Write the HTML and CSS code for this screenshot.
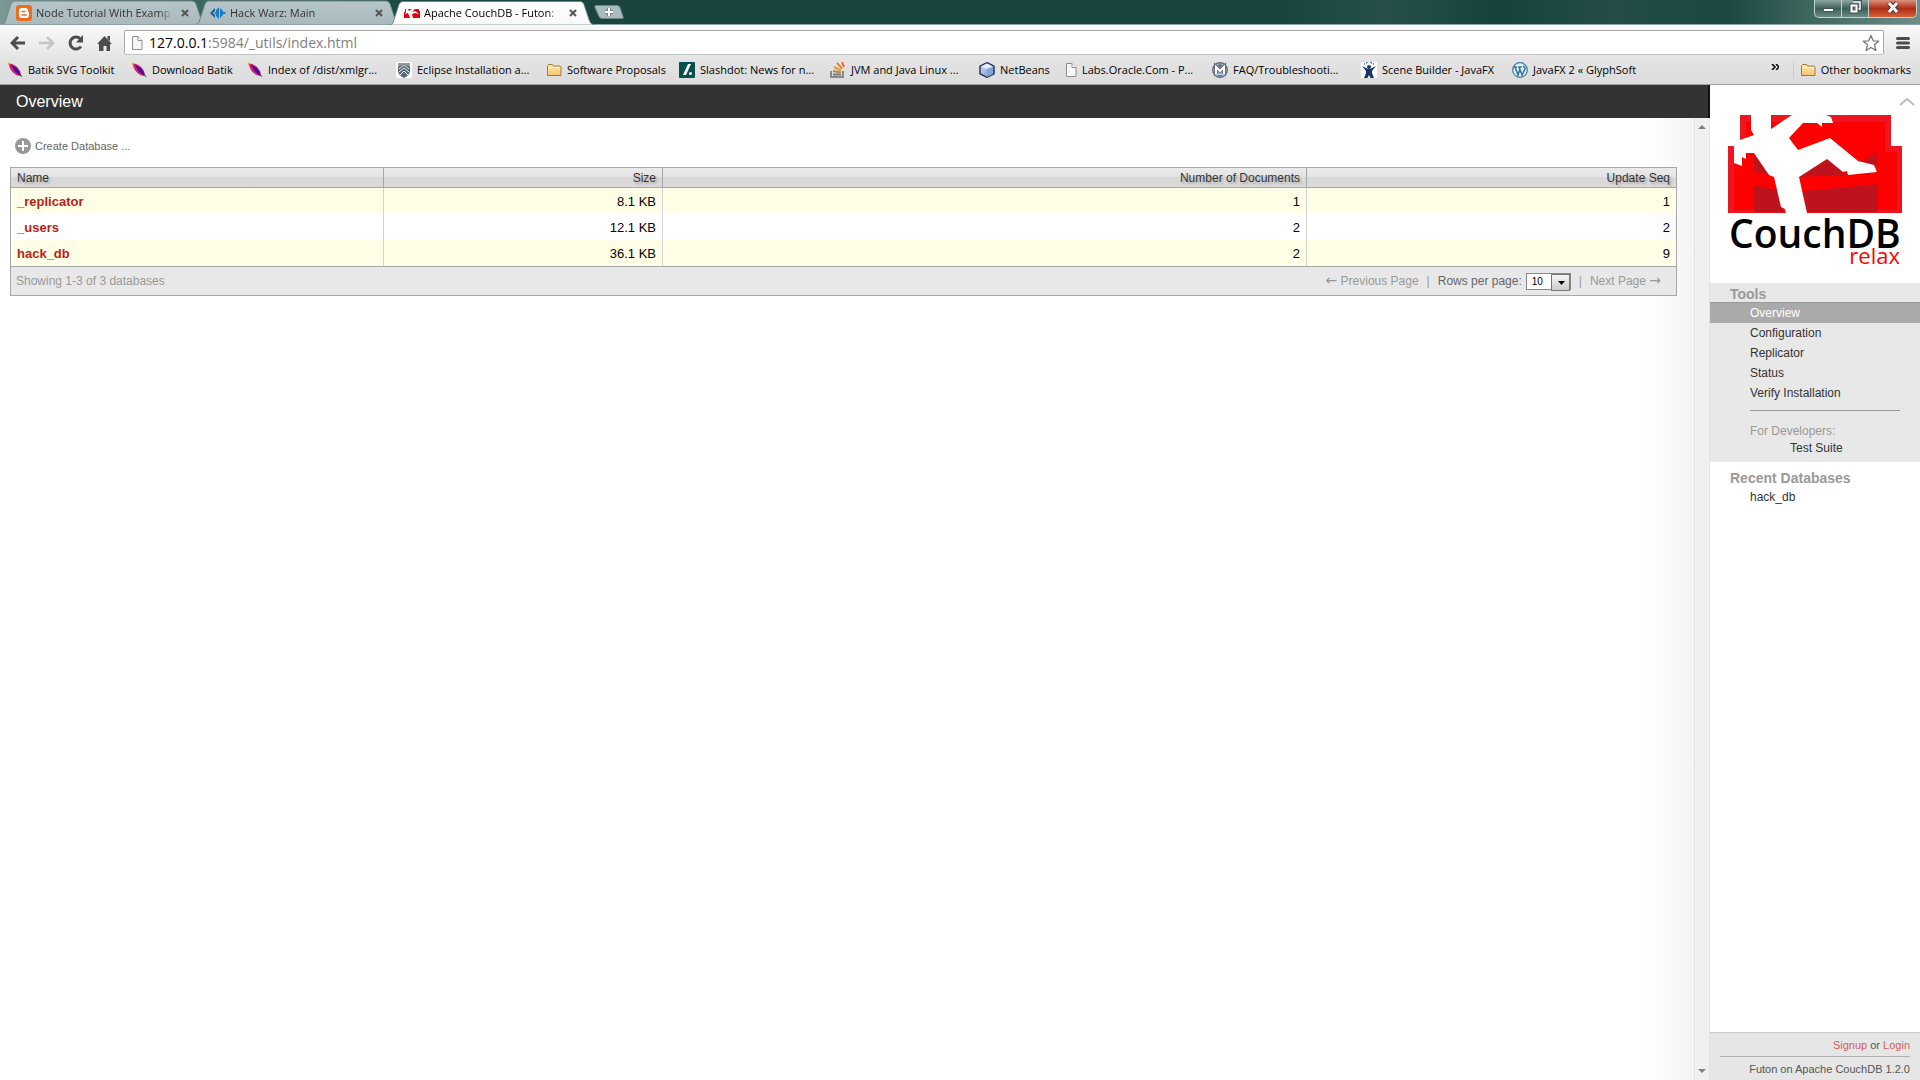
FILE: index.html
```html
<!DOCTYPE html>
<html lang="en">
<head>
<meta charset="utf-8">
<title>Apache CouchDB - Futon: Overview</title>
<link rel="stylesheet" href="styles.css">
</head>
<body>
<svg class="defs" aria-hidden="true">
  <defs>
    <linearGradient id="folderFill" x2="0" y2="1"><stop stop-color="#fdeab2"/><stop offset="1" stop-color="#f6c570"/></linearGradient>
    <linearGradient id="tabFill" x2="0" y2="1"><stop stop-color="#b7c5c9"/><stop offset="1" stop-color="#a9b9be"/></linearGradient>
    <linearGradient id="activeFill" x2="0" y2="1"><stop stop-color="#fff"/><stop offset="1" stop-color="#f9f9f9"/></linearGradient>
    <linearGradient id="cubeFill" x2="1" y2="1"><stop stop-color="#cfe0f7"/><stop offset="1" stop-color="#6d93c9"/></linearGradient>
  </defs>
  <symbol id="feather" viewBox="0 0 16 16">
    <path d="M1 1l3 3" stroke="#d8b040" stroke-width="2"/>
    <path d="M2 3c1-2 3-1 5 0 4 2 7 6 7 11-6 0-11-5-12-11z" fill="#e0206c"/>
    <path d="M4 3c5 1 9 6 10 11-4-2-8-6-10-11z" fill="#4a0a9c"/>
    <path d="M3 5c2 4 5 7 9 8-4-1-7-4-9-8z" fill="#b3127c"/>
    <path d="M13 12l2 3" stroke="#555"/>
  </symbol>
  <symbol id="folder" viewBox="0 0 16 16">
    <path d="M1.500 13.500v-10l1-1h4l1 1.500h6.500l1 1v8.500z" fill="url(#folderFill)" stroke="#a3763c"/>
    <path d="M2.500 5.500h12" stroke="#fff5d2"/>
  </symbol>
  <symbol id="page" viewBox="0 0 12 16">
    <path d="M1.500 1.500h5.500l4 4v9h-9.500z" fill="#f6f6f6" stroke="#8e8e8e"/>
    <path d="M7 1.500v4h4" fill="#fff" stroke="#8e8e8e"/>
  </symbol>
  <symbol id="close" viewBox="0 0 8 8"><path d="M1 1l6 6M7 1l-6 6" stroke="#555" stroke-width="2"/></symbol>
  <symbol id="tab" viewBox="0 0 204 24">
    <path d="M0 24c3 0 3-2 4-5l5-15q1-3 4-3h177q3 0 4 3l5 15c1 3 2 5 5 5z"/>
    <path d="M0 24c3 0 3-2 4-5l5-15q1-3 4-3h177q3 0 4 3l5 15c1 3 2 5 5 5" fill="none" class="edge"/>
  </symbol>
</svg>

<header class="browser">
  <div class="titlebar">
    <nav class="tabs" aria-label="Tabs">
      <div class="tab">
        <svg class="shape"><use href="#tab"/></svg>
        <svg class="icon" viewBox="0 0 16 16"><rect width="16" height="16" rx="3" fill="#ec6f1c"/><path d="M6 3h3q3 0 3 3 0 1 1 1v3q0 3-3 3H6q-3 0-3-3V6q0-3 3-3z" fill="#fff"/><path d="M6 6.500h3M6 10h4" stroke="#ec6f1c" stroke-width="1.500" stroke-linecap="round"/></svg>
        <a class="label" href="#">Node Tutorial With Examp</a>
        <button class="close" aria-label="Close tab"><svg><use href="#close"/></svg></button>
      </div>
      <div class="tab">
        <svg class="shape"><use href="#tab"/></svg>
        <svg class="icon" viewBox="0 0 16 16"><path d="M5 3v3L3 8l2 2v3L0 8z" fill="#1d5f96"/><path d="M6 5l3-3v12l-3-3V9.500L4.500 8 6 6.500z" fill="#1a7cc6"/><path d="M10 3l3 3v1h2l1 1-1 1h-2v1l-3 3z" fill="#1a7cc6"/></svg>
        <a class="label" href="#">Hack Warz: Main</a>
        <button class="close" aria-label="Close tab"><svg><use href="#close"/></svg></button>
      </div>
      <div class="tab active">
        <svg class="shape"><use href="#tab"/></svg>
        <svg class="icon" viewBox="0 0 16 16"><path d="M1 4h14v2h1v7H0V7h1z" fill="#e9000f"/><path d="M2 4h2l1 2 3-2h3L8 7l3-1 4 3-4-1-3 1 1 4H6L4 8 1 9l1-2z" fill="#fff"/></svg>
        <a class="label" href="#">Apache CouchDB - Futon:</a>
        <button class="close" aria-label="Close tab"><svg><use href="#close"/></svg></button>
      </div>
      <button class="newtab" aria-label="New tab"><svg viewBox="0 0 32 16"><path d="M3 1.500h21q2 0 3 2l3 9q1 2-1 2H9q-2 0-3-2l-4-9q-1-2 1-2z" fill="#a9bbbd" stroke="#6d8886"/><path d="M16 4v8M12 8h8" stroke="#6f8487" stroke-width="4"/><path d="M16 4v8M12 8h8" stroke="#fff" stroke-width="2"/></svg></button>
    </nav>
    <div class="winbuttons">
      <button aria-label="Minimize"><svg viewBox="0 0 14 14"><path d="M2.500 8.500h10v3h-10z" fill="#fff" stroke="#455"/></svg></button>
      <button aria-label="Restore"><svg viewBox="0 0 14 14"><path d="M5 1.500h7.500v8H10" fill="none" stroke="#455" stroke-width="3"/><path d="M5 2h7v7h-2" fill="none" stroke="#fff" stroke-width="1.500"/><path d="M3.500 5.500h5v6h-5z" fill="none" stroke="#455" stroke-width="4"/><path d="M3.500 5.500h5v6h-5z" fill="#566" stroke="#fff" stroke-width="2"/></svg></button>
      <button class="quit" aria-label="Close"><svg viewBox="0 0 14 14"><path d="M3 3l8 9M11 3l-8 9" stroke="#533" stroke-width="5"/><path d="M3 3l8 9M11 3l-8 9" stroke="#fff" stroke-width="3"/></svg></button>
    </div>
  </div>

  <div class="toolbar">
    <button aria-label="Back"><svg viewBox="0 0 16 16"><path d="M8 2L2 8l6 6M2 8h13" fill="none" stroke="#4d4d4d" stroke-width="3"/></svg></button>
    <button aria-label="Forward"><svg viewBox="0 0 16 16"><path d="M8 2l6 6-6 6M14 8H0" fill="none" stroke="#c4c4c4" stroke-width="2.500"/></svg></button>
    <button aria-label="Reload"><svg viewBox="0 0 16 16"><path d="M13 11.500A6 6 0 1 1 12 3.500" fill="none" stroke="#4d4d4d" stroke-width="3"/><path d="M15 0v7.500H8z" fill="#4d4d4d"/></svg></button>
    <button aria-label="Home"><svg viewBox="0 0 16 16"><path d="M7.500 1l7 7.500-1.500 1V16H9.500v-5h-3v5H2V9.500L.5 8.500z" fill="#4d4d4d"/><path d="M10.500 1H13v5l-2.500-2z" fill="#4d4d4d"/></svg></button>
    <div class="omnibox">
      <svg class="pageicon"><use href="#page"/></svg>
      <span class="url"><b>127.0.0.1</b>:5984/_utils/index.html</span>
      <button aria-label="Bookmark this page"><svg viewBox="0 0 18 18"><path d="M9 1.500l2.200 5.300 5.500.4-4.200 3.600 1.500 5.700L9 13.500l-5 3 1.500-5.700L1.300 7.200l5.500-.4z" fill="#fff" stroke="#777" stroke-width="1.300" stroke-linejoin="round"/></svg></button>
    </div>
    <button class="menu" aria-label="Menu"><svg viewBox="0 0 14 14"><path d="M1.500 2.500h11M1.500 7h11M1.500 11.500h11" stroke="#4d4d4d" stroke-width="3" stroke-linecap="round"/></svg></button>
  </div>

  <nav class="bookmarks" aria-label="Bookmarks">
    <div class="marks">
      <a href="#"><svg><use href="#feather"/></svg>Batik SVG Toolkit</a>
      <a href="#"><svg><use href="#feather"/></svg>Download Batik</a>
      <a href="#"><svg><use href="#feather"/></svg>Index of /dist/xmlgr...</a>
      <a href="#"><svg viewBox="0 0 16 16"><path fill="#fff" d="M0 0h16v16H0z"/><path d="M2 1h12v8q0 4-6 7-6-3-6-7z" fill="#536b78"/><path d="M2 1h12v4L8 2 2 5z" fill="#999"/><path d="M3 7l5-4 5 4M3 10l5-4 5 4M4 13l4-4 4 4" fill="none" stroke="#e8eef0"/></svg>Eclipse Installation a...</a>
      <a href="#"><svg><use href="#folder"/></svg>Software Proposals</a>
      <a href="#"><svg viewBox="0 0 16 16"><rect width="16" height="16" rx="1" fill="#07514d"/><path d="M9 2h3L7 13H4z" fill="#fff"/><circle cx="11.500" cy="11.500" r="1.500" fill="#fff"/></svg>Slashdot: News for n...</a>
      <a href="#"><svg viewBox="0 0 16 16"><path d="M1 9v6h12V9" fill="none" stroke="#888" stroke-width="2"/><path d="M3 12.500h8" stroke="#777" stroke-width="2"/><path d="M3 9l8 1.500" stroke="#a98b58" stroke-width="2"/><path d="M4 5l7 3.500" stroke="#e49b2f" stroke-width="2"/><path d="M7 1l5 5.500" stroke="#f07f24" stroke-width="2"/><path d="M12 0l2 5" stroke="#f4603a" stroke-width="2"/></svg>JVM and Java Linux ...</a>
      <a href="#"><svg viewBox="0 0 16 16"><path d="M8 .7l7 3.500v7.600l-7 3.500-7-3.500V4.200z" fill="url(#cubeFill)" stroke="#1e2c55" stroke-width="1.400"/><path d="M2 4.500L8 7l6-2.500L8 1.500z" fill="#e4effc"/><path d="M8 7v8l6-3V4.700z" fill="#83a5d6"/></svg>NetBeans</a>
      <a class="plain" href="#"><svg><use href="#page"/></svg>Labs.Oracle.Com - P...</a>
      <a href="#"><svg viewBox="0 0 16 16"><circle cx="8" cy="8" r="7.300" fill="#a9cdea" stroke="#66727c" stroke-width="1.400"/><path d="M8 1l3 3-3 2-3-2zM8 15l3-2H5z" fill="#777"/><path d="M4 12V5l4 4 4-4v7" fill="none" stroke="#667" stroke-width="4"/><path d="M4 12V5l4 4 4-4v7" fill="none" stroke="#fff" stroke-width="2"/></svg>FAQ/Troubleshooti...</a>
      <a href="#"><svg viewBox="0 0 16 16"><path fill="#fff" d="M0 0h16v16H0z"/><path d="M1 4l6 3h2l6-3-4 5v2l2 5H9.500L8 13l-1.500 3H3l2-5V9z" fill="#12386b"/><circle cx="8" cy="5" r="2" fill="#12386b"/><path d="M3 2h1M5 .7h1.500M9.500.7H11M12 2h1" stroke="#2d70ac" stroke-width="1.400"/></svg>Scene Builder - JavaFX</a>
      <a href="#"><svg viewBox="0 0 16 16"><circle cx="8" cy="8" r="7.300" fill="#eaf3f8" stroke="#33799f" stroke-width="1.200"/><path d="M2 5h3M6 5h4M3 5l3 8 2-6M7 5l3 8 3-6q0-2-2-3" fill="none" stroke="#33799f" stroke-width="1.600"/></svg>JavaFX 2 « GlyphSoft</a>
    </div>
    <button class="more" aria-label="More bookmarks"><svg viewBox="0 0 8 6"><path d="M1 0l3 3-3 3M5 0l3 3-3 3" fill="none" stroke="#000" stroke-width="1.500"/></svg></button>
    <a class="other" href="#"><svg><use href="#folder"/></svg>Other bookmarks</a>
  </nav>
</header>

<div class="futon">
  <main class="wrap">
    <h1>Overview</h1>
    <div class="scroller">
      <div class="content">
        <button class="create"><svg viewBox="0 0 16 16"><circle cx="8" cy="8" r="8" fill="#989898"/><path d="M8 3v10M3 8h10" stroke="#fff" stroke-width="2"/></svg>Create Database ...</button>
        <table class="listing">
          <colgroup><col class="c-name"><col class="c-size"><col class="c-count"><col class="c-seq"></colgroup>
          <thead>
            <tr><th>Name</th><th>Size</th><th>Number of Documents</th><th>Update Seq</th></tr>
          </thead>
          <tbody>
            <tr><th><a href="#">_replicator</a></th><td>8.1 KB</td><td>1</td><td>1</td></tr>
            <tr><th><a href="#">_users</a></th><td>12.1 KB</td><td>2</td><td>2</td></tr>
            <tr><th><a href="#">hack_db</a></th><td>36.1 KB</td><td>2</td><td>9</td></tr>
          </tbody>
        </table>
        <div class="tablefoot">
          <span>Showing 1-3 of 3 databases</span>
          <div class="paging">
            <span><span class="arrow">←</span> Previous Page</span><span class="bar">|</span>
            <label for="perpage">Rows per page:</label>
            <span class="pick">
              <select id="perpage"><option>10</option><option>25</option><option>50</option><option>100</option></select>
              <svg viewBox="0 0 7 4"><path d="M0 0h7L3.500 4z"/></svg>
            </span>
            <span class="bar">|</span><span>Next Page <span class="arrow">→</span></span>
          </div>
        </div>
      </div>
      <div class="scrollbar" aria-hidden="true">
        <svg viewBox="0 0 8 4"><path d="M0 4h8L4 0z" fill="#808080"/></svg>
        <svg viewBox="0 0 8 4"><path d="M0 0h8L4 4z" fill="#808080"/></svg>
      </div>
    </div>
  </main>

  <aside class="sidebar">
    <button class="toggle" aria-label="Hide sidebar"><svg viewBox="0 0 16 9"><path d="M1 8l7-6 7 6" fill="none" stroke="#bbb" stroke-width="2"/></svg></button>
    <a class="logo" href="#" aria-label="CouchDB relax">
      <svg viewBox="0 0 174 154">
        <path d="M12 0h151v31h11v67H0V31h12z" fill="#ed1620"/>
        <path d="M18 7h139v30h12v58H6V31h12z" fill="#f00"/>
        <path d="M26 38v18l20 6zM26 70l24 5 6 22H26zM71 62l28-18 16 13 5 3zM134 46l15-9v14zM75 76l75-7v28H79z" fill="#be131d"/>
        <path d="M23 0v15l3 5-14 5v6H6v17l8 3v-9l4 2v-6h8l15 22 5 2 7 30 4 2 1 4h21l-8-36 28-18 16 13 4-1 1 4 29-3-3-7-16-4-28-23-32 12-9-12L75 8h14l5 4V8h11l-2-6-5-2H64L43 14V0z" fill="#fff"/>
        <text class="brand" x="1" y="133">CouchDB</text>
        <text class="relax" x="172" y="149">relax</text>
      </svg>
    </a>
    <section class="tools">
      <h2>Tools</h2>
      <ul>
        <li class="selected"><a href="#">Overview</a></li>
        <li><a href="#">Configuration</a></li>
        <li><a href="#">Replicator</a></li>
        <li><a href="#">Status</a></li>
        <li><a href="#">Verify Installation</a></li>
      </ul>
      <div class="dev"><span>For Developers:</span><a href="#">Test Suite</a></div>
    </section>
    <section class="recent">
      <h2>Recent Databases</h2>
      <ul><li><a href="#">hack_db</a></li></ul>
    </section>
    <footer>
      <p><a href="#">Signup</a> or <a href="#">Login</a></p>
      <p class="version">Futon on Apache CouchDB 1.2.0</p>
    </footer>
  </aside>
</div>
</body>
</html>
```
FILE: styles.css
```css
* { box-sizing: border-box; }
html, body { height: 100%; margin: 0; }
body {
  display: flex;
  flex-direction: column;
  font: 13px/16px "Liberation Sans", Arial, sans-serif;
  color: #000;
  background: #fff;
  overflow: hidden;
}
a { color: inherit; text-decoration: none; }
button { padding: 0; border: 0; background: none; font: inherit; color: inherit; }
svg { display: block; flex: none; }
ul, h1, h2, p { margin: 0; padding: 0; list-style: none; }
.defs { position: absolute; width: 0; height: 0; }

/* Browser chrome */
.browser { flex: none; font: 11px/16px "Open Sans", "Noto Sans", sans-serif; }
.titlebar {
  display: flex;
  justify-content: space-between;
  height: 25px;
  border-bottom: 1px solid #8fa5a3;
  background: linear-gradient(90deg, #7b9a95 0, #47716c 120px, #1c4a45 400px, #19443f 600px, #19453f 67%, #264f49 72%, #17423c 78%, #234d46 84%, #1b4841 90%, #6c8f88 100%);
}
.tabs { display: flex; padding-left: 2px; }
.tab {
  position: relative;
  display: flex;
  align-items: center;
  gap: 4px;
  width: 204px;
  height: 25px;
  margin-right: -10px;
  padding: 1px 16px 0 14px;
  color: #333;
}
.shape { position: absolute; left: 0; top: 0; width: 204px; height: 24px; fill: url(#tabFill); stroke: none; }
.edge { stroke: #70868a; }
.tab > .icon { position: relative; width: 16px; height: 16px; }
.label {
  position: relative;
  flex: 1;
  white-space: nowrap;
  -webkit-mask-image: linear-gradient(90deg, #000 90%, transparent);
  mask-image: linear-gradient(90deg, #000 90%, transparent);
}
.close { position: relative; padding: 0 1px 0 4px; }
.close svg { width: 8px; height: 8px; }
.active { z-index: 1; color: #000; }
.active .shape { fill: url(#activeFill); height: 25px; }
.newtab { align-self: center; margin-left: 9px; }
.newtab svg { width: 32px; height: 16px; }
.winbuttons {
  display: flex;
  height: 18px;
  margin-right: 3px;
  border: 1px solid #c5d4d1;
  border-top: 0;
  border-radius: 0 0 5px 5px;
  background: linear-gradient(#8fa8a3, #3d5f5a 50%, #6a8a84);
}
.winbuttons button { display: flex; justify-content: center; width: 27px; border-right: 1px solid #c5d4d1; }
.winbuttons .quit { width: 47px; border: 0; border-radius: 0 0 4px 0; background: linear-gradient(#d9917f, #b02d14 50%, #d5603c); }
.winbuttons svg { width: 14px; height: 14px; }

.toolbar {
  display: flex;
  align-items: center;
  height: 31px;
  padding: 5px 10px 1px;
  gap: 13px;
  background: linear-gradient(#f9f9f9, #e6e6e6);
}
.toolbar svg { width: 16px; height: 16px; }
.omnibox {
  display: flex;
  flex: 1;
  align-items: center;
  height: 25px;
  margin: 0 -1px 0 -2px;
  padding: 0 3px 0 6px;
  border: 1px solid #aaa;
  border-bottom-color: #c4c4c4;
  border-radius: 2px;
  background: #fff;
}
.omnibox .pageicon { width: 12px; height: 16px; }
.omnibox button svg { width: 18px; height: 18px; }
.url { flex: 1; padding-left: 6px; font-size: 14px; line-height: 20px; color: #808080; }
.url b { font-weight: 400; color: #000; }
.toolbar .menu svg { width: 14px; height: 14px; }

.bookmarks {
  display: flex;
  align-items: center;
  height: 29px;
  padding: 0 8px 0 7px;
  border-bottom: 1px solid #a0a0a0;
  background: linear-gradient(#e5e5e5, #dcdcdc);
}
.marks {
  display: grid;
  flex: 1;
  grid-template-columns: 124px 116px 149px 150px 133px 151px 149px 86px 147px 149px 151px auto;
}
.bookmarks a { display: flex; align-items: center; gap: 5px; white-space: nowrap; }
.bookmarks svg { width: 16px; height: 16px; }
.bookmarks .plain svg { width: 12px; }
.bookmarks .more { align-self: flex-start; margin: 8px 14px 0 0; }
.bookmarks .more svg { width: 8px; height: 6px; }
.bookmarks .other { padding: 0 1px 0 6px; border-left: 1px solid #c4ccd4; }

/* Futon */
.futon { display: flex; flex: 1; min-height: 0; }
.wrap { display: flex; flex: 1; flex-direction: column; min-width: 0; }
h1 {
  flex: none;
  padding: 0 16px;
  border-right: 2px solid #111;
  background: #333;
  color: #fff;
  font-size: 16px;
  font-weight: 400;
  line-height: 33px;
}
.scroller { display: flex; flex: 1; min-height: 0; }
.content {
  flex: 1;
  padding: 20px 17px 0 10px;
  background: linear-gradient(270deg, #f4f4f4, #fff 50px);
}
.scrollbar {
  display: flex;
  flex-direction: column;
  justify-content: space-between;
  align-items: center;
  width: 16px;
  padding: 7px 0;
  border: solid #e4e4e4;
  border-width: 0 1px;
  background: #f0f0f0;
}
.scrollbar svg { width: 8px; height: 4px; }
.create { display: flex; align-items: center; gap: 4px; padding-left: 5px; font-size: 11px; color: #666; }
.create svg { width: 16px; height: 16px; }
.listing {
  width: 100%;
  margin-top: 13px;
  border: 1px solid #a7a7a7;
  border-collapse: separate;
  border-spacing: 0;
  table-layout: fixed;
}
.c-name { width: 373px; }
.c-size { width: 279px; }
.c-count { width: 644px; }
.listing th, .listing td { height: 26px; padding: 2px 6px 0; text-align: right; border-right: 1px solid #d4d4d4; }
.listing tr > :first-child { text-align: left; }
.listing tr > :last-child { border-right: 0; }
.listing thead th {
  height: 20px;
  padding-top: 0;
  border-right-color: #a7a7a7;
  border-bottom: 1px solid #a7a7a7;
  background: linear-gradient(#eaeaea, #e4e4e4 45%, #d8d8d8 46%, #dadada);
  color: #333;
  font-size: 12px;
  font-weight: 400;
  text-shadow: 2px 2px 2px #aaa;
}
.listing tbody tr:nth-child(odd) { background: #ffffe8; }
.listing tbody th { color: #ba1e16; }
.tablefoot {
  display: flex;
  justify-content: space-between;
  align-items: center;
  height: 29px;
  padding: 0 15px 0 5px;
  border: 1px solid #a7a7a7;
  border-top: 0;
  background: #e8e8e8;
  color: #999;
  font-size: 12px;
}
.paging { display: flex; align-items: center; }
.paging label { color: #666; }
.arrow { font-family: "DejaVu Sans", sans-serif; font-size: 14px; line-height: 12px; }
.bar { padding: 0 8px; }
.pick { position: relative; margin-left: 4px; }
.pick select {
  display: block;
  width: 45px;
  height: 17px;
  padding: 0 0 0 5px;
  border: 1px solid #888;
  border-radius: 0;
  background: #fff;
  color: #000;
  font: 10px/15px "Liberation Sans", Arial, sans-serif;
  appearance: none;
}
.pick::after {
  content: "";
  position: absolute;
  top: 1px;
  right: 1px;
  width: 17px;
  height: 15px;
  border: 1px solid #777;
  background: linear-gradient(#f6f6f6, #ccc);
  pointer-events: none;
}
.pick svg { position: absolute; z-index: 1; right: 6px; top: 8px; width: 7px; height: 4px; pointer-events: none; }

.sidebar { display: flex; flex: none; flex-direction: column; width: 210px; background: #fff; }
.toggle { align-self: flex-end; margin: 12px 5px 0; }
.toggle svg { width: 16px; height: 9px; }
.logo { display: block; padding: 9px 0 14px 18px; }
.logo svg { width: 174px; height: 154px; }
.brand { font: 600 39px "Open Sans", "Noto Sans", sans-serif; }
.relax { font: 22px "Open Sans", "Noto Sans", sans-serif; fill: #f00; text-anchor: end; }
h2 { padding-left: 20px; color: #999; font-size: 14px; font-weight: 700; line-height: 16px; }
.tools { padding-top: 3px; background: #e8e8e8; color: #333; }
.sidebar li { padding-left: 40px; font-size: 12px; line-height: 20px; }
.sidebar .selected { border-top: 1px solid #999; background: #aaa; color: #fff; }
.dev { margin: 7px 20px 0 40px; padding: 12px 0 5px; border-top: 1px solid #999; font-size: 12px; }
.dev span { display: block; color: #999; line-height: 16px; }
.dev a { display: block; padding-left: 40px; line-height: 18px; }
.recent { padding-top: 8px; color: #333; }
.recent ul { padding-top: 1px; }
footer {
  margin-top: auto;
  padding: 3px 10px 0;
  border-top: 1px solid #ccc;
  background: #e6e6e6;
  color: #555;
  font-size: 11px;
  line-height: 18px;
  text-align: right;
}
footer a { color: #d3605b; }
.version { margin-top: 2px; padding: 3px 0 2px; border-top: 1px solid #b0b0b0; }
```
